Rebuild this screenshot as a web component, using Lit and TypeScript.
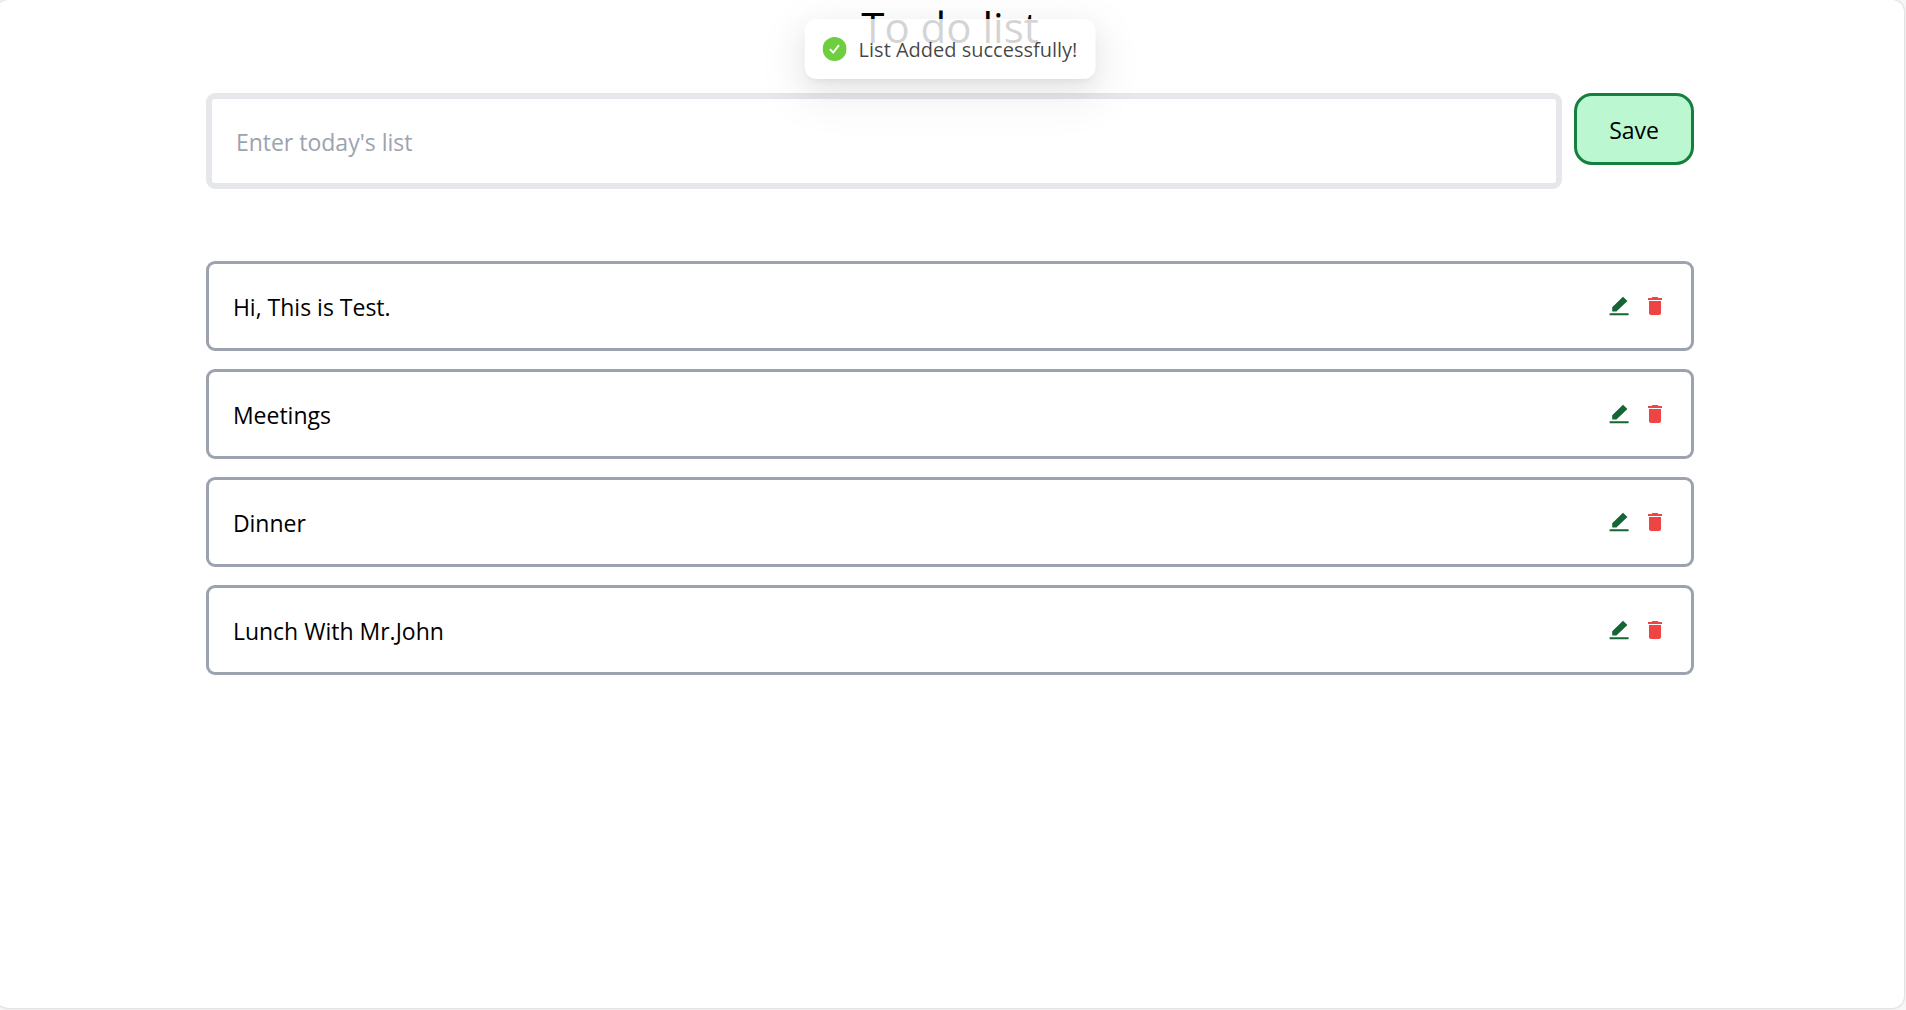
import { LitElement, html, css } from "lit";
import { customElement, property, state } from "lit/decorators.js";

const fontStack = css`"Segoe UI", "Open Sans", "Noto Sans", sans-serif`;

@customElement("todo-item")
class TodoItem extends LitElement {
  @property() text = "";

  static styles = css`
    :host {
      display: flex;
      align-items: center;
      justify-content: space-between;
      box-sizing: border-box;
      min-height: 90px;
      padding: 0 24px;
      border: 3px solid #9ca3af;
      border-radius: 9px;
    }
    .label {
      padding-top: 2px;
    }
    .actions {
      display: flex;
      gap: 12px;
    }
    .action {
      display: block;
      padding: 0;
      border: 0;
      background: none;
      cursor: pointer;
    }
    .edit {
      color: #166534;
    }
    .delete {
      color: #ef4444;
    }
    .icon {
      display: block;
      width: 24px;
      height: 24px;
      fill: currentColor;
    }
  `;

  private emit(name: string) {
    this.dispatchEvent(new CustomEvent(name));
  }

  render() {
    return html`
      <span class="label">${this.text}</span>
      <div class="actions">
        <button class="action edit" aria-label="Edit ${this.text}" @click=${() => this.emit("edit")}>
          <svg class="icon" viewBox="0 0 24 24" aria-hidden="true">
            <path d="M5.200 17.500V13.200L16 2.800l4.400 4.200L9.400 17.500zM2.600 19.200h19v2h-19z" />
          </svg>
        </button>
        <button class="action delete" aria-label="Delete ${this.text}" @click=${() => this.emit("delete")}>
          <svg class="icon" viewBox="0 0 24 24" aria-hidden="true">
            <path d="M6 19c0 1.1.9 2 2 2h8c1.1 0 2-.9 2-2V7H6zM19 4h-3.500l-1-1h-5l-1 1H5v2h14z" />
          </svg>
        </button>
      </div>
    `;
  }
}

@customElement("app-root")
class AppRoot extends LitElement {
  @state() private items = ["Hi, This is Test.", "Meetings", "Dinner", "Lunch With Mr.John"];
  @state() private draft = "";

  static styles = css`
    :host {
      display: flow-root;
      box-sizing: border-box;
      min-height: 100vh;
      overflow: hidden;
      padding-bottom: 2px;
      background: #f7f7f7;
      color: #000;
      font: 23px/36px ${fontStack};
    }
    .page {
      box-sizing: border-box;
      min-height: calc(100vh - 2px);
      margin: 0 2px 0 -4px;
      border-radius: 12px;
      background: #fff;
      box-shadow: 0 0 2px 1px #dcdcdc;
    }
    .content {
      width: 78%;
      margin: 0 auto;
    }
    .title {
      margin: 0 0 39px;
      font-size: 42px;
      line-height: 54px;
      font-weight: 400;
      text-align: center;
    }
    .form {
      display: flex;
      align-items: flex-start;
      gap: 12px;
      margin-bottom: 72px;
    }
    .field {
      flex: 1;
      min-width: 0;
      box-sizing: border-box;
      height: 96px;
      padding: 2px 24px 0;
      border: 6px solid #e5e7eb;
      border-radius: 9px;
      background: #fff;
      color: inherit;
      font: inherit;
      outline: 0;
    }
    .field::placeholder {
      color: #9ca3af;
      opacity: 1;
    }
    .save {
      width: 120px;
      height: 72px;
      padding: 2px 0 0;
      border: 3px solid #15803d;
      border-radius: 18px;
      background: #bbf7d0;
      color: inherit;
      font: inherit;
      cursor: pointer;
    }
    .list {
      display: grid;
      gap: 18px;
    }
    .toast {
      position: absolute;
      top: 19px;
      left: calc(50% - 3px);
      transform: translateX(-50%);
      display: flex;
      align-items: center;
      gap: 12px;
      box-sizing: border-box;
      height: 60px;
      padding: 0 18px;
      border-radius: 12px;
      background: #fff;
      color: rgba(0, 0, 0, 0.88);
      font-size: 20px;
      white-space: nowrap;
      opacity: 0.83;
      box-shadow: 0 9px 24px rgba(0, 0, 0, 0.08), 0 5px 9px -6px rgba(0, 0, 0, 0.12),
        0 14px 42px 12px rgba(0, 0, 0, 0.05);
    }
    .message {
      padding-top: 2px;
    }
    .check {
      width: 24px;
      height: 24px;
    }
  `;

  private save(event: Event) {
    event.preventDefault();
    if (!this.draft.trim()) return;
    this.items = [...this.items, this.draft.trim()];
    this.draft = "";
  }

  private remove(index: number) {
    this.items = this.items.filter((_, i) => i !== index);
  }

  private edit(index: number) {
    this.draft = this.items[index];
    this.remove(index);
  }

  render() {
    return html`
      <main class="page">
        <div class="content">
          <h1 class="title">To do list</h1>
          <form class="form" @submit=${this.save}>
            <input
              class="field"
              type="text"
              aria-label="Enter today's list"
              placeholder="Enter today's list"
              .value=${this.draft}
              @input=${(e: Event) => (this.draft = (e.target as HTMLInputElement).value)}
            />
            <button class="save" type="submit">Save</button>
          </form>
          <div class="list">
            ${this.items.map(
              (text, i) => html`<todo-item
                .text=${text}
                @edit=${() => this.edit(i)}
                @delete=${() => this.remove(i)}
              ></todo-item>`
            )}
          </div>
        </div>
      </main>
      <div class="toast" role="status">
        <svg class="check" viewBox="0 0 24 24" aria-hidden="true">
          <circle cx="12" cy="12" r="12" fill="#52c41a" />
          <path d="M7.300 12.200l3.300 3.400 5.800-7.400" fill="none" stroke="#fff" stroke-width="1.900" />
        </svg>
        <span class="message">List Added successfully!</span>
      </div>
    `;
  }
}
